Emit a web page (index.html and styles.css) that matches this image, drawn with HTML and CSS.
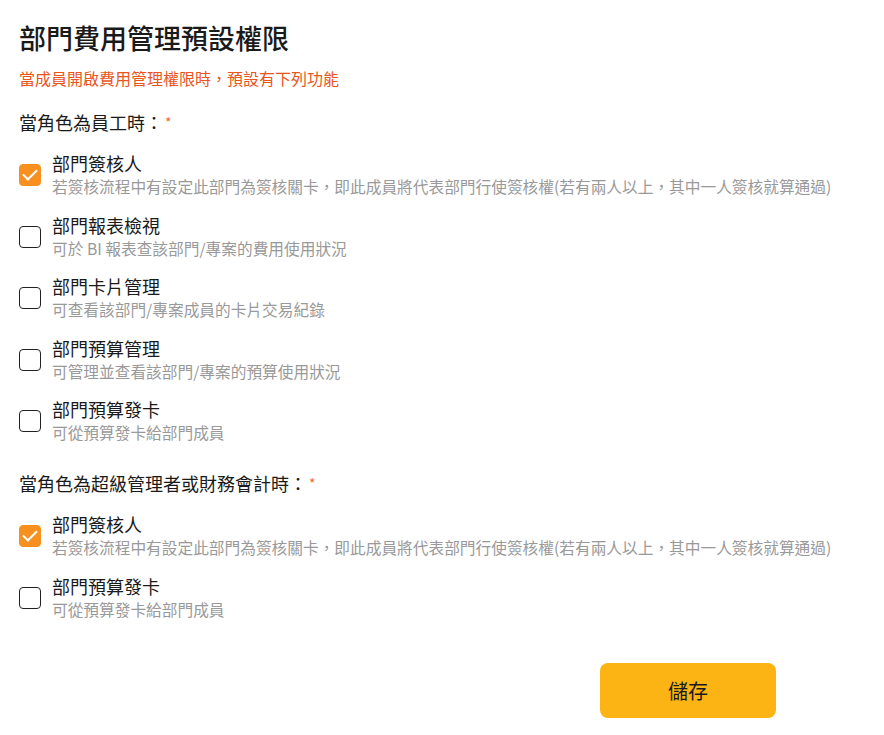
FILE: index.html
```html
<!DOCTYPE html>
<html>
<head>
    <meta charset="UTF-8">
    <title>部門費用管理預設權限</title>
    <link rel="stylesheet" href="styles.css">
</head>
<body>
    <div class="container">
        <h1>部門費用管理預設權限</h1>
        <p class="hint">當成員開啟費用管理權限時，預設有下列功能</p>

        <div class="section">
            <div class="section-label">當角色為員工時：<span class="required">*</span></div>

            <label class="option">
                <input type="checkbox" checked>
                <span class="box"></span>
                <span class="text">
                    <span class="name">部門簽核人</span>
                    <span class="desc">若簽核流程中有設定此部門為簽核關卡，即此成員將代表部門行使簽核權(若有兩人以上，其中一人簽核就算通過)</span>
                </span>
            </label>
            <label class="option">
                <input type="checkbox">
                <span class="box"></span>
                <span class="text">
                    <span class="name">部門報表檢視</span>
                    <span class="desc">可於 BI 報表查該部門/專案的費用使用狀況</span>
                </span>
            </label>
            <label class="option">
                <input type="checkbox">
                <span class="box"></span>
                <span class="text">
                    <span class="name">部門卡片管理</span>
                    <span class="desc">可查看該部門/專案成員的卡片交易紀錄</span>
                </span>
            </label>
            <label class="option">
                <input type="checkbox">
                <span class="box"></span>
                <span class="text">
                    <span class="name">部門預算管理</span>
                    <span class="desc">可管理並查看該部門/專案的預算使用狀況</span>
                </span>
            </label>
            <label class="option">
                <input type="checkbox">
                <span class="box"></span>
                <span class="text">
                    <span class="name">部門預算發卡</span>
                    <span class="desc">可從預算發卡給部門成員</span>
                </span>
            </label>
        </div>

        <div class="section">
            <div class="section-label">當角色為超級管理者或財務會計時：<span class="required">*</span></div>

            <label class="option">
                <input type="checkbox" checked>
                <span class="box"></span>
                <span class="text">
                    <span class="name">部門簽核人</span>
                    <span class="desc">若簽核流程中有設定此部門為簽核關卡，即此成員將代表部門行使簽核權(若有兩人以上，其中一人簽核就算通過)</span>
                </span>
            </label>
            <label class="option">
                <input type="checkbox">
                <span class="box"></span>
                <span class="text">
                    <span class="name">部門預算發卡</span>
                    <span class="desc">可從預算發卡給部門成員</span>
                </span>
            </label>
        </div>

        <div class="actions">
            <button class="save">儲存</button>
        </div>
    </div>
</body>
</html>
```

FILE: styles.css
```css
body {
    font-family: "Noto Sans CJK TC", "Noto Sans", sans-serif;
    margin: 0;
    background-color: white;
    color: #1a1a1a;
}
.container {
    padding: 19px 19px 0 19px;
}
h1 {
    font-size: 27px;
    font-weight: 500;
    line-height: 38px;
    margin: 0;
}
.hint {
    color: #e8561c;
    font-size: 16px;
    line-height: 22px;
    margin: 10px 0 0 0;
}
.section {
    margin-top: 20px;
}
.section + .section {
    margin-top: 25px;
}
.section-label {
    font-size: 18px;
    line-height: 26px;
    margin-bottom: 14px;
}
.required {
    color: #f06a2a;
    font-size: 14px;
    vertical-align: top;
    margin-left: 2px;
}
.option {
    display: flex;
    align-items: flex-start;
    gap: 11px;
    margin-bottom: 11.6px;
    cursor: pointer;
}
.option input {
    display: none;
}
.box {
    width: 22px;
    height: 22px;
    box-sizing: border-box;
    border: 1.5px solid #222;
    border-radius: 4px;
    flex-shrink: 0;
    margin-top: 15px;
    position: relative;
}
.option input:checked + .box {
    background-color: #f7901e;
    border-color: #f7901e;
}
.option input:checked + .box::after {
    content: "";
    position: absolute;
    left: 6px;
    top: 1px;
    width: 6px;
    height: 12px;
    border: solid white;
    border-width: 0 2px 2px 0;
    transform: rotate(45deg);
}
.text {
    display: flex;
    flex-direction: column;
    margin-top: 2px;
}
.name {
    font-size: 18px;
    line-height: 24px;
}
.desc {
    font-size: 15.7px;
    line-height: 24px;
    color: #999;
}
.actions {
    display: flex;
    justify-content: flex-end;
    padding-right: 89px;
    margin-top: 41px;
}
.save {
    width: 176px;
    height: 55px;
    border: none;
    border-radius: 8px;
    background-color: #fbb413;
    color: #1a1a1a;
    font-family: inherit;
    font-size: 20px;
    cursor: pointer;
}
```
